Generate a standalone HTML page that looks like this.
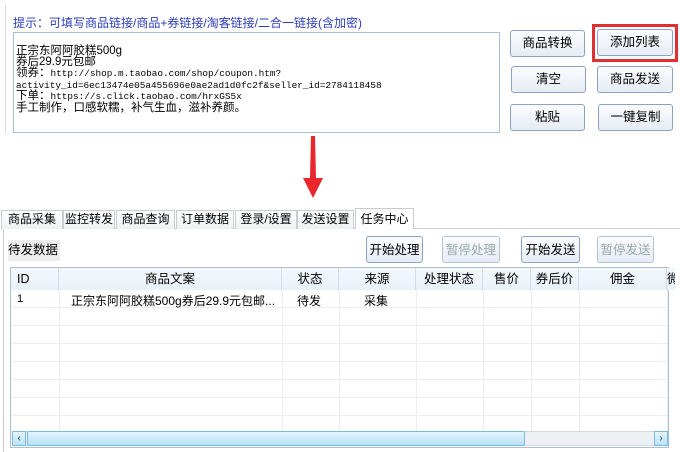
<!DOCTYPE html>
<html><head><meta charset="utf-8"><style>
*{margin:0;padding:0;box-sizing:border-box}
body{width:680px;height:452px;background:#fff;position:relative;overflow:hidden;font-family:"Liberation Sans","Noto Sans CJK SC",sans-serif;font-size:12px;color:#000}
.a{position:absolute}
.hint{left:13px;top:14px;color:#2b3db8;font-size:12px}
.ta{left:13px;top:32px;width:487px;height:101px;border:1px solid #a9bfd6;background:#fff}
.ta div{position:absolute;left:2px;font-size:11.5px;line-height:11px;white-space:nowrap}
.ta .mono{font-family:"Liberation Mono","Noto Sans CJK SC",monospace;font-size:9.4px}
.btn{position:absolute;border:1px solid #8da2c0;border-radius:3px;background:linear-gradient(#fbfcfe,#e6ecf5);text-align:center;font-size:12.5px;line-height:24px}
.red{left:592px;top:24px;width:86px;height:38px;border:3px solid #e03034}
.tab{position:absolute;top:210px;height:19px;border:1px solid #c9ccd2;border-bottom:none;background:linear-gradient(#fff,#eef0f3);font-size:12px;line-height:17px;text-align:center}
.panel{left:3px;top:228px;width:677px;height:224px;border-top:1px solid #c9ccd2;border-left:1px solid #c9ccd2}
.sb{position:absolute;border:1px solid #8da2c0;border-radius:3px;background:linear-gradient(#fbfcfe,#e6ecf5);text-align:center;font-size:12.5px;line-height:26px;top:236px;height:27px}
.dis{color:#9aa;border-color:#b5c2d4}
.tbl{left:10px;top:267px;width:659px;height:181px;border:1px solid #a9bfd6}
.hd{position:absolute;top:0;height:22px;line-height:22px;text-align:center;font-size:12.5px;border-right:1px solid #d5dbe4;background:linear-gradient(#f4f8fc,#e9f1f9)}
.vl{position:absolute;top:22px;height:141px;border-left:1px solid #eceff2}
.hl{position:absolute;left:0;width:657px;border-top:1px solid #eceff2}
</style></head><body>
<div class="a" style="left:5px;top:5px;height:128px;border-left:1px solid #d8dde5"></div>
<div class="a hint">提示：可填写商品链接/商品+券链接/淘客链接/二合一链接(含加密)</div>
<div class="a ta">
<div style="top:13px">正宗东阿阿胶糕500g</div>
<div style="top:24px">券后29.9元包邮</div>
<div style="top:35px">领券：<span class="mono">http://shop.m.taobao.com/shop/coupon.htm?</span></div>
<div style="top:47px"><span class="mono">activity_id=6ec13474e05a455696e0ae2ad1d0fc2f&amp;seller_id=2784118458</span></div>
<div style="top:58px">下单：<span class="mono">https://s.click.taobao.com/hrxGS5x</span></div>
<div style="top:70px">手工制作，口感软糯，补气生血，滋补养颜。</div>
</div>
<div class="btn" style="left:510px;top:30px;width:75px;height:27px">商品转换</div>
<div class="a red"></div>
<div class="btn" style="left:597px;top:29px;width:76px;height:27px">添加列表</div>
<div class="btn" style="left:511px;top:66px;width:75px;height:27px">清空</div>
<div class="btn" style="left:597px;top:66px;width:76px;height:27px">商品发送</div>
<div class="btn" style="left:510px;top:104px;width:75px;height:27px">粘贴</div>
<div class="btn" style="left:598px;top:104px;width:75px;height:27px">一键复制</div>
<svg class="a" style="left:300px;top:134px" width="26" height="66"><polygon points="11,2 15,2 16,44 23,44 13,64 3,44 10,44" fill="#e8262b"/></svg>
<div class="a panel"></div>
<div class="tab" style="left:1px;width:62px">商品采集</div>
<div class="tab" style="left:63px;width:52px">监控转发</div>
<div class="tab" style="left:116px;width:59px">商品查询</div>
<div class="tab" style="left:176px;width:58px">订单数据</div>
<div class="tab" style="left:235px;width:62px">登录/设置</div>
<div class="tab" style="left:297px;width:57px">发送设置</div>
<div class="tab" style="left:355px;width:59px;top:208px;height:21px;background:#fff;line-height:21px">任务中心</div>
<div class="a" style="left:8px;top:240px;height:21px;width:52px;background:#eee;line-height:21px;font-size:12.5px">待发数据</div>
<div class="sb" style="left:366px;width:57px">开始处理</div>
<div class="sb dis" style="left:442px;width:58px">暂停处理</div>
<div class="sb" style="left:521px;width:59px">开始发送</div>
<div class="sb dis" style="left:597px;width:57px">暂停发送</div>
<div class="a tbl">
<div class="hd" style="left:0;width:48px;text-align:left;padding-left:6px">ID</div>
<div class="hd" style="left:48px;width:223px">商品文案</div>
<div class="hd" style="left:271px;width:57px">状态</div>
<div class="hd" style="left:328px;width:77px">来源</div>
<div class="hd" style="left:405px;width:67px">处理状态</div>
<div class="hd" style="left:472px;width:48px">售价</div>
<div class="hd" style="left:520px;width:48px">券后价</div>
<div class="hd" style="left:568px;width:88px">佣金</div>
<div class="hd" style="left:656px;width:8px;border:none;overflow:hidden">微</div>
<div class="vl" style="left:48px"></div><div class="vl" style="left:271px"></div><div class="vl" style="left:328px"></div><div class="vl" style="left:405px"></div><div class="vl" style="left:472px"></div><div class="vl" style="left:520px"></div><div class="vl" style="left:568px"></div><div class="vl" style="left:656px"></div>
<div class="hl" style="top:39px"></div><div class="hl" style="top:57px"></div><div class="hl" style="top:75px"></div><div class="hl" style="top:93px"></div><div class="hl" style="top:111px"></div><div class="hl" style="top:129px"></div><div class="hl" style="top:147px"></div>
<div class="a" style="left:6px;top:25px;font-size:11px" >1</div>
<div class="a" style="left:60px;top:24px;font-size:12px;white-space:nowrap">正宗东阿阿胶糕500g券后29.9元包邮...</div>
<div class="a" style="left:286px;top:24px;font-size:12px">待发</div>
<div class="a" style="left:353px;top:24px;font-size:12px">采集</div>
<div class="a" style="left:1px;top:163px;width:655px;height:15px;background:#eef1f3;border:1px solid #d0dde6"></div>
<div class="a" style="left:1px;top:163px;width:14px;height:15px;background:linear-gradient(#e6f6fd,#b9e3f7);border:1px solid #7fb9d9;color:#246;font-size:10px;line-height:13px;text-align:center">‹</div>
<div class="a" style="left:16px;top:163px;width:498px;height:15px;background:linear-gradient(#e3f4fc,#b6e0f6);border:1px solid #7fb9d9;border-radius:2px"></div>
<div class="a" style="left:643px;top:163px;width:14px;height:15px;background:linear-gradient(#e6f6fd,#b9e3f7);border:1px solid #7fb9d9;color:#246;font-size:10px;line-height:13px;text-align:center">›</div>
</div>
</body></html>
